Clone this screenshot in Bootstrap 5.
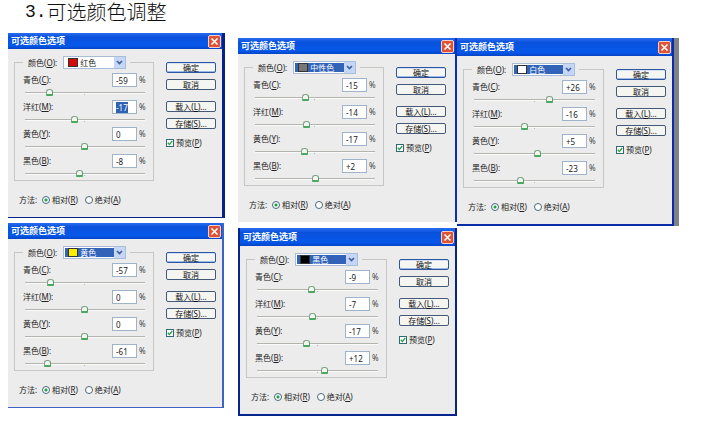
<!DOCTYPE html>
<html lang="zh-CN">
<head>
<meta charset="utf-8">
<meta name="viewport" content="width=device-width, initial-scale=1">
<title>可选颜色调整</title>
<link href="https://cdn.jsdelivr.net/npm/bootstrap@5.3.0/dist/css/bootstrap.min.css" rel="stylesheet">
<style>
body { background: #fff; color: #222; font: 8px/12px "Noto Sans", "Noto Sans CJK SC", sans-serif; }
.page { padding: 0 45px 0 8px; }
.page-title { font: 300 20px/24px "Noto Sans CJK SC", sans-serif; color: #111; margin: 0 0 9px; padding-left: 17px; }
.page-title .num { font: 18px/24px "Liberation Mono", monospace; }
.board { display: grid; grid-template-columns: 230fr 219fr 222fr; align-items: start; }
.stack-a { padding-right: 13px; gap: 5px; }
.stack-b { padding-top: 5px; gap: 6px; }
.stack-c { padding-top: 5px; }

.dlg { background: #ececec; border: 0 solid #0a2fb4; }
.dlg-red { border-width: 0 3px 1px 0; border-color: #06208c; }
.dlg-neutral { border-right-width: 2px; }
.dlg-white { border-width: 0 2px 2px 0; margin-right: 5px; box-shadow: 5px 0 0 #808088; border-color: #0a2ca8; }
.dlg-yellow { border-width: 0 2px 1px 0; border-color: #3f62c8; margin-right: 1px; }
.dlg-black { border-width: 0 2px 2px 2px; border-color: #06248e; }

.dlg-title { height: 16px; padding: 0 1px 0 3px; color: #fff; background: linear-gradient(#2a6cf0, #0a52dc 25%, #0658ea 80%, #0444c4); }
.dlg-white .dlg-title, .dlg-black .dlg-title { height: 18px; }
.dlg-title h2 { font-size: 9px; line-height: 16px; font-weight: 700; margin: 0; }
.dlg-close { width: 13px; height: 13px; padding: 0; border: 1px solid #f5d0c8; border-radius: 2px; background: #dc5434; line-height: 0; }
.dlg-close svg { width: 9px; height: 9px; }

.dlg-body { padding: 7px 6px 11px; }
.dlg-neutral .dlg-body { padding-right: 9px; }
.tuning { gap: 12px; }
.tones { border: 1px solid #c6c6c2; padding: 4px 7px 2px 8px; min-width: 0; }
.tones legend { font-size: 8px; line-height: 13px; padding: 0 4px 0 5px; gap: 6px; margin: 0; }
.picker { width: 63px; height: 13px; border: 1px solid #a9bcd8; background: #fff; }
.picked { margin: 1px 0 1px 1px; padding-left: 3px; gap: 2px; min-width: 0; }
.picker.active .picked { background: #3163b8; color: #fff; }
.swatch { width: 10px; height: 9px; border: 1px solid #333; flex: none; }
.picked select { appearance: none; border: 0; padding: 0; background: transparent; color: inherit; font: inherit; line-height: 11px; width: 100%; min-width: 0; outline: 0; }
.picked option { color: #222; }
.drop { width: 11px; height: 11px; flex: none; background: #c6d6f6; }

.tone + .tone { margin-top: 3px; }
.tone-head { height: 14px; }
.tone-value { width: 25px; height: 14px; padding: 0 3px; border: 1px solid #9fb3cb; background: #fff; color: #222; font: inherit; outline: 0; }
.tone-value::selection { background: #2f62b5; color: #fff; }
.unit { width: 9px; padding-left: 2px; color: #444; font-size: 8px; }
.tone-range { display: block; appearance: none; height: 10px; width: calc(100% + 4px); margin: 0 -2px; background:
  linear-gradient(#b4b4ae, #b4b4ae) center 5px / calc(100% - 7px) 1px no-repeat,
  linear-gradient(#fafafa, #fafafa) center 6px / calc(100% - 7px) 1px no-repeat,
  linear-gradient(#b4b4ae, #b4b4ae) center 5px / 1px 3px no-repeat; }
.tone-range::-webkit-slider-thumb { appearance: none; width: 7px; height: 7px; background: #f4f6f2; border: 1px solid #84a088; border-right-color: #55a266; border-bottom: 2px solid #4aa95e; border-radius: 3px 3px 1px 1px; }

.actions { width: 50px; flex: none; padding-top: 6px; gap: 6px; }
.act { height: 11px; padding: 0; border: 1px solid #445878; border-radius: 2px; background: #f5f5f2; color: #111; font: inherit; line-height: 9px; }
.act.primary { border-color: #2c56a0; box-shadow: inset 0 -1px #9db9ea, inset 0 1px #d3e0f8; }
.act.spaced { margin-top: 5px; }
.preview { margin-top: 3px; height: 10px; gap: 2px; }
.preview input { appearance: none; width: 8px; height: 8px; margin: 0; border: 1px solid #2d6a72; background: #fff; flex: none; }
.preview input:checked { background: #fff url("data:image/svg+xml,%3Csvg xmlns='http://www.w3.org/2000/svg' viewBox='0 0 6 6'%3E%3Cpath d='M.8 2.8 2.4 4.6 5.2 1' fill='none' stroke='%2321a045' stroke-width='1.3'/%3E%3C/svg%3E") center / 6px 6px no-repeat; }
.method { margin: 13px 0 0 5px; height: 12px; }
.method .choice { gap: 2px; margin-left: 7px; }
.method .cap { width: 16px; flex: none; white-space: nowrap; }
.method input { appearance: none; width: 8px; height: 8px; margin: 0; border: 1px solid #44697c; border-radius: 50%; background: #fff; flex: none; }
.method input:checked { background: radial-gradient(circle, #22a045 0 1px, #fff 2px); }
.nb { white-space: nowrap; }
</style>
</head>
<body>
<main class="page">
  <h1 class="page-title d-flex"><span class="num">3.</span>可选颜色调整</h1>
  <div class="board">
    <div class="stack-a d-flex flex-column" data-dialogs="red yellow"></div>
    <div class="stack-b d-flex flex-column" data-dialogs="neutral black"></div>
    <div class="stack-c d-flex flex-column" data-dialogs="white"></div>
  </div>
</main>

<script src="https://cdn.jsdelivr.net/npm/bootstrap@5.3.0/dist/js/bootstrap.bundle.min.js"></script>
<script>
const tones = [['青色', 'C'], ['洋红', 'M'], ['黄色', 'Y'], ['黑色', 'B']];
const dialogs = {
  red:     { name: '红色',   fill: '#d40a0a', values: [-59, -17, 0, -8] },
  yellow:  { name: '黄色',   fill: '#ffee00', values: [-57, 0, 0, -61], active: true },
  neutral: { name: '中性色', fill: '#777777', values: [-15, -14, -17, 2], active: true },
  black:   { name: '黑色',   fill: '#000000', values: [-9, -7, -17, 12], active: true },
  white:   { name: '白色',   fill: '#ffffff', values: [26, -16, 5, -23], active: true }
};
const signed = v => (v > 0 ? '+' : '') + v;

function toneRow(key, i, value) {
  const [name, letter] = tones[i];
  return `<div class="tone">
    <div class="tone-head d-flex align-items-center">
      <label class="me-auto nb" for="${key}-v${i}">${name}(<u>${letter}</u>):</label>
      <input class="tone-value" type="text" id="${key}-v${i}" value="${signed(value)}">
      <span class="unit">%</span>
    </div>
    <input class="tone-range" type="range" min="-100" max="100" value="${value}" aria-label="${name}">
  </div>`;
}

function dialog(key) {
  const d = dialogs[key];
  return `<section class="dlg dlg-${key}">
    <header class="dlg-title d-flex align-items-center justify-content-between">
      <h2>可选颜色选项</h2>
      <button type="button" class="dlg-close d-flex align-items-center justify-content-center" aria-label="关闭">
        <svg viewBox="0 0 9 9"><path d="M1.5 1.5 7.5 7.5M7.5 1.5 1.5 7.5" stroke="#fff" stroke-width="1.6"/></svg>
      </button>
    </header>
    <form class="dlg-body">
      <div class="tuning d-flex align-items-start">
        <fieldset class="tones flex-grow-1">
          <legend class="float-none w-auto d-flex align-items-center">
            <label class="nb" for="${key}-color">颜色(<u>O</u>):</label>
            <span class="picker d-flex ${d.active ? 'active' : ''}">
              <span class="picked d-flex flex-grow-1 align-items-center">
                <span class="swatch" style="background:${d.fill}"></span>
                <select id="${key}-color">${Object.values(dialogs).map(o =>
                  `<option${o.name === d.name ? ' selected' : ''}>${o.name}</option>`).join('')}</select>
              </span>
              <svg class="drop" viewBox="0 0 11 11"><path d="M3 4 5.500 6.500 8 4" fill="none" stroke="#3f5f9c" stroke-width="1.700"/></svg>
            </span>
          </legend>
          ${d.values.map((v, i) => toneRow(key, i, v)).join('')}
        </fieldset>
        <div class="actions d-flex flex-column">
          <button type="button" class="act primary">确定</button>
          <button type="button" class="act">取消</button>
          <button type="button" class="act spaced">载入(<u>L</u>)...</button>
          <button type="button" class="act">存储(<u>S</u>)...</button>
          <label class="preview nb d-flex align-items-center"><input type="checkbox" checked><span>预览(<u>P</u>)</span></label>
        </div>
      </div>
      <div class="method d-flex align-items-center nb">
        <span class="cap">方法:</span>
        <label class="choice d-flex align-items-center"><input type="radio" name="method" checked><span>相对(<u>R</u>)</span></label>
        <label class="choice d-flex align-items-center"><input type="radio" name="method"><span>绝对(<u>A</u>)</span></label>
      </div>
    </form>
  </section>`;
}

document.querySelectorAll('[data-dialogs]').forEach(col => {
  col.innerHTML = col.dataset.dialogs.split(' ').map(dialog).join('');
});
const current = document.getElementById('red-v1');
current.focus();
current.select();
</script>
</body>
</html>
